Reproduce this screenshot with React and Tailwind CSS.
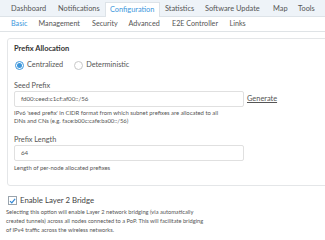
import React from "react";

const topTabs = [
  ["Dashboard", "w-[47px]"],
  ["Notifications", "w-[52px]"],
  ["Configuration", "w-[55px]"],
  ["Statistics", "w-[40px]"],
  ["Software Update", "w-[68px]"],
  ["Map", "w-[25px]"],
  ["Tools", "w-[28px]"],
];
const subTabs = [
  ["Basic", "w-[27.5px]"],
  ["Management", "w-[53.5px]"],
  ["Security", "w-[36.5px]"],
  ["Advanced", "w-[43.5px]"],
  ["E2E Controller", "w-[57.5px]"],
  ["Links", "w-[24px]"],
];

export default function App() {
  return (
    <div className="w-[325px] h-[240px] overflow-hidden bg-white font-['Lato',sans-serif] text-[#555]">
      {/* Top nav */}
      <div className="flex items-end h-[17px] bg-[#eef3f8] border-b border-[#dde3e8] pl-[6px]">
        {topTabs.map(([t, w]) => {
          const active = t === "Configuration";
          return (
            <div
              key={t}
              className={
                active
                  ? `${w} shrink-0 whitespace-nowrap h-[15px] -mb-px pl-[4px] flex items-center bg-white border border-b-0 border-[#dde3e8] text-[#3d97dc] text-[7.4px]`
                  : `${w} shrink-0 whitespace-nowrap h-[15px] pl-[5px] flex items-center text-[#555] text-[7.4px]`
              }
            >
              {t}
            </div>
          );
        })}
      </div>
      {/* Sub nav */}
      <div className="flex items-center h-[15px] border-b border-[#dfe3e6] pl-[11px] text-[7.2px]">
        {subTabs.map(([t, w]) => (
          <div key={t} className={`${w} shrink-0 whitespace-nowrap ${t === "Basic" ? "text-[#3d97dc]" : "text-[#555]"}`}>
            {t}
          </div>
        ))}
      </div>
      {/* Content */}
      <div className="pl-[7px] pt-[6px]">
        <div className="w-[340px] border border-[#e4e6e8] rounded-[3px] pl-[6px] pt-[5px] pb-[13px]">
          <div className="text-[7.5px] font-bold text-[#333] leading-[10px]">Prefix Allocation</div>
          <div className="flex items-center mt-[6px] h-[10px] text-[7.3px]">
            <span className="w-[9px] h-[9px] rounded-full border border-[#3d97dc] flex items-center justify-center ml-[1px]">
              <span className="w-[5px] h-[5px] rounded-full bg-[#3d97dc]" />
            </span>
            <span className="ml-[3px]">Centralized</span>
            <span className="w-[9px] h-[9px] rounded-full border border-[#c8c8c8] ml-[11px]" />
            <span className="ml-[3px]">Deterministic</span>
          </div>
          <div className="mt-[11px] text-[7.3px] leading-[9px]">Seed Prefix</div>
          <div className="flex items-center mt-[1px]">
            <div className="w-[230px] h-[16px] border border-[#e0e0e0] rounded-[2px] flex items-center pl-[6px] text-[6.2px] text-[#555]">
              fd00:ceed:c1cf:af00::/56
            </div>
            <span className="ml-[3px] text-[7.4px] underline text-[#555]">Generate</span>
          </div>
          <div className="mt-[2px] text-[5.9px] leading-[7.5px] text-[#555] whitespace-nowrap">
            IPv6 'seed prefix' in CIDR format from which subnet prefixes are allocated to all
            <br />
            DNs and CNs (e.g. face:b00c:cafe:ba00::/56)
          </div>
          <div className="mt-[11px] text-[7.3px] leading-[9px]">Prefix Length</div>
          <div className="mt-[1px] w-[230px] h-[16px] border border-[#e0e0e0] rounded-[2px] flex items-center pl-[6px] text-[6.2px]">
            64
          </div>
          <div className="mt-[3px] text-[5.9px] leading-[7.5px]">Length of per-node allocated prefixes</div>
        </div>
        <div className="flex items-center mt-[10px] ml-[1px] h-[10px]">
          <span className="w-[9px] h-[9px] border border-[#9aa4ad] bg-white flex items-center justify-center">
            <svg width="8" height="8" viewBox="0 0 8 8">
              <path d="M1.2 4.2 L3.2 6.2 L7 1.6" fill="none" stroke="#2f87d6" strokeWidth="1.4" />
            </svg>
          </span>
          <span className="ml-[3px] text-[7.8px] text-[#444]">Enable Layer 2 Bridge</span>
        </div>
        <div className="mt-[1px] -ml-[1px] text-[5.7px] leading-[9.4px] text-[#555] whitespace-nowrap">
          Selecting this option will enable Layer 2 network bridging (via automatically
          <br />
          created tunnels) across all nodes connected to a PoP. This will facilitate bridging
          <br />
          of IPv4 traffic across the wireless networks.
        </div>
      </div>
    </div>
  );
}
